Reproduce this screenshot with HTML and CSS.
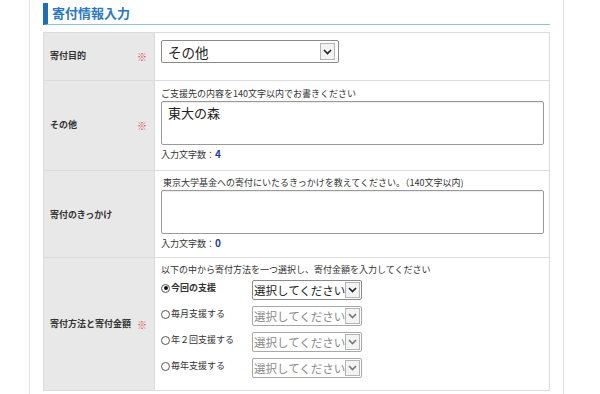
FILE: index.html
```html
<!DOCTYPE html>
<html lang="ja">
<head>
    <meta charset="UTF-8">
    <meta name="viewport" content="width=device-width, initial-scale=1.0">
    <title>寄付情報入力</title>
    <link rel="stylesheet" href="styles.css">
</head>
<body>

    <div class="page">
        <h2 class="section-title">寄付情報入力</h2>

        <table class="form-table">
            <tr class="row-purpose">
                <th><span>寄付目的</span><span class="req">※</span></th>
                <td>
                    <div class="select-box select-large">
                        <span class="select-text">その他</span>
                        <span class="select-arrow">
                            <svg width="9" height="6" viewBox="0 0 9 6"><path d="M1 1 L4.5 4.5 L8 1" fill="none" stroke="#222" stroke-width="1.6"/></svg>
                        </span>
                    </div>
                </td>
            </tr>
            <tr class="row-other">
                <th><span>その他</span><span class="req">※</span></th>
                <td>
                    <p class="hint">ご支援先の内容を140文字以内でお書きください</p>
                    <div class="textarea">東大の森</div>
                    <p class="count">入力文字数：<b>4</b></p>
                </td>
            </tr>
            <tr>
                <th><span>寄付のきっかけ</span></th>
                <td>
                    <p class="hint">&nbsp;東京大学基金への寄付にいたるきっかけを教えてください。（140文字以内)</p>
                    <div class="textarea"></div>
                    <p class="count">入力文字数：<b>0</b></p>
                </td>
            </tr>
            <tr class="row-method">
                <th><span>寄付方法と寄付金額</span><span class="req">※</span></th>
                <td>
                    <p class="hint">以下の中から寄付方法を一つ選択し、寄付金額を入力してください</p>
                    <div class="method-list" id="method-list">
                        <!-- rows are added by the script below -->
                    </div>
                </td>
            </tr>
        </table>
    </div>

    <script>
        // Donation methods
        const methods = [
            { label: "今回の支援", checked: true },
            { label: "毎月支援する", checked: false },
            { label: "年２回支援する", checked: false },
            { label: "毎年支援する", checked: false }
        ];

        const list = document.getElementById("method-list");
        methods.forEach(m => {
            list.innerHTML += `
                <div class="method-row">
                    <label class="method-label ${m.checked ? "is-checked" : ""}">
                        <span class="radio"></span>${m.label}
                    </label>
                    <div class="select-box select-small ${m.checked ? "" : "is-disabled"}">
                        <span class="select-text">選択してください</span>
                        <span class="select-arrow">
                            <svg width="9" height="6" viewBox="0 0 9 6"><path d="M1 1 L4.5 4.5 L8 1" fill="none" stroke="${m.checked ? "#222" : "#777"}" stroke-width="1.6"/></svg>
                        </span>
                    </div>
                </div>
            `;
        });
    </script>

</body>
</html>
```

FILE: styles.css
```css
body {
    margin: 0;
    background: #fff;
    color: #333;
    font-family: "Noto Sans CJK JP", "Noto Sans", sans-serif;
}

.page {
    width: 507px;
    min-height: 394px;
    margin-left: 29px;
    padding: 3px 13px 0;
    border-left: 1px solid #e2e2e2;
    border-right: 1px solid #e2e2e2;
}

/* Heading */
.section-title {
    margin: 0;
    height: 21px;
    line-height: 20px;
    padding-left: 4px;
    border-left: 5px solid #1f6db3;
    border-bottom: 1px solid #8fc3d9;
    color: #2a78be;
    font-size: 13px;
    font-weight: bold;
}

/* Form table */
.form-table {
    width: 100%;
    margin-top: 7px;
    border-collapse: collapse;
}

.form-table th,
.form-table td {
    border: 1px solid #dcdcdc;
    vertical-align: top;
}

.form-table th {
    width: 97px;
    padding: 0 7px 0 6px;
    background: #e8e8e8;
    font-size: 9px;
    font-weight: bold;
    text-align: left;
    vertical-align: middle;
    color: #333;
}

.form-table th span:first-child {
    float: left;
}

.req {
    float: right;
    color: #e0484e;
    font-weight: normal;
    font-size: 10px;
}

.form-table td {
    padding: 5px 5px 7px 6px;
}

.row-purpose td {
    padding-top: 7px;
    padding-bottom: 17px;
}

.row-other td {
    padding-top: 6px;
    padding-bottom: 9px;
}

.row-method td {
    padding-bottom: 9px;
}

.hint {
    margin: 0;
    font-size: 9px;
    line-height: 14px;
    color: #333;
}

.textarea {
    box-sizing: border-box;
    height: 44px;
    padding: 2px 6px;
    border: 1px solid #9a9a9a;
    border-radius: 2px;
    box-shadow: inset 0 1px 1px rgba(0, 0, 0, 0.08);
    font-size: 13px;
    line-height: 18px;
    color: #222;
}

.count {
    margin: 3px 0 0;
    font-size: 9px;
    line-height: 12px;
}

.count b {
    color: #1b3aa8;
    font-size: 10px;
}

/* Select boxes */
.select-box {
    box-sizing: border-box;
    display: flex;
    align-items: center;
    justify-content: space-between;
    border: 1px solid #8a8a8a;
    border-radius: 2px;
    background: #fff;
    color: #222;
    overflow: hidden;
}

.select-large {
    width: 178px;
    height: 23px;
    padding-left: 6px;
    font-size: 13.5px;
}

.select-large .select-arrow {
    margin-right: 3px;
}

.select-arrow {
    display: flex;
    align-items: center;
    justify-content: center;
    flex-shrink: 0;
    width: 13px;
    height: 15px;
    border: 1px solid #b5b5b5;
    background: #f3f3f3;
}

.select-small {
    width: 110px;
    height: 20px;
    padding-left: 1px;
    font-size: 11.5px;
}

.select-small .select-text {
    white-space: nowrap;
}

.select-small .select-arrow {
    height: 14px;
    margin-right: 1px;
}

.select-box.is-disabled {
    color: #8a8a8a;
    border-color: #a8a8a8;
}

/* Donation methods */
.method-list {
    margin-top: 3px;
    display: flex;
    flex-direction: column;
    gap: 6px;
    padding-bottom: 3px;
}

.method-row {
    display: flex;
    align-items: flex-start;
}

.method-label {
    display: flex;
    align-items: center;
    width: 91px;
    padding-top: 2px;
    font-size: 9px;
    line-height: 12px;
    color: #333;
}

.method-label.is-checked {
    font-weight: bold;
}

.radio {
    width: 7px;
    height: 7px;
    margin-right: 1px;
    border: 1px solid #555;
    border-radius: 50%;
    position: relative;
}

.is-checked .radio::after {
    content: "";
    position: absolute;
    left: 1.5px;
    top: 1.5px;
    width: 4px;
    height: 4px;
    border-radius: 50%;
    background: #111;
}
```
